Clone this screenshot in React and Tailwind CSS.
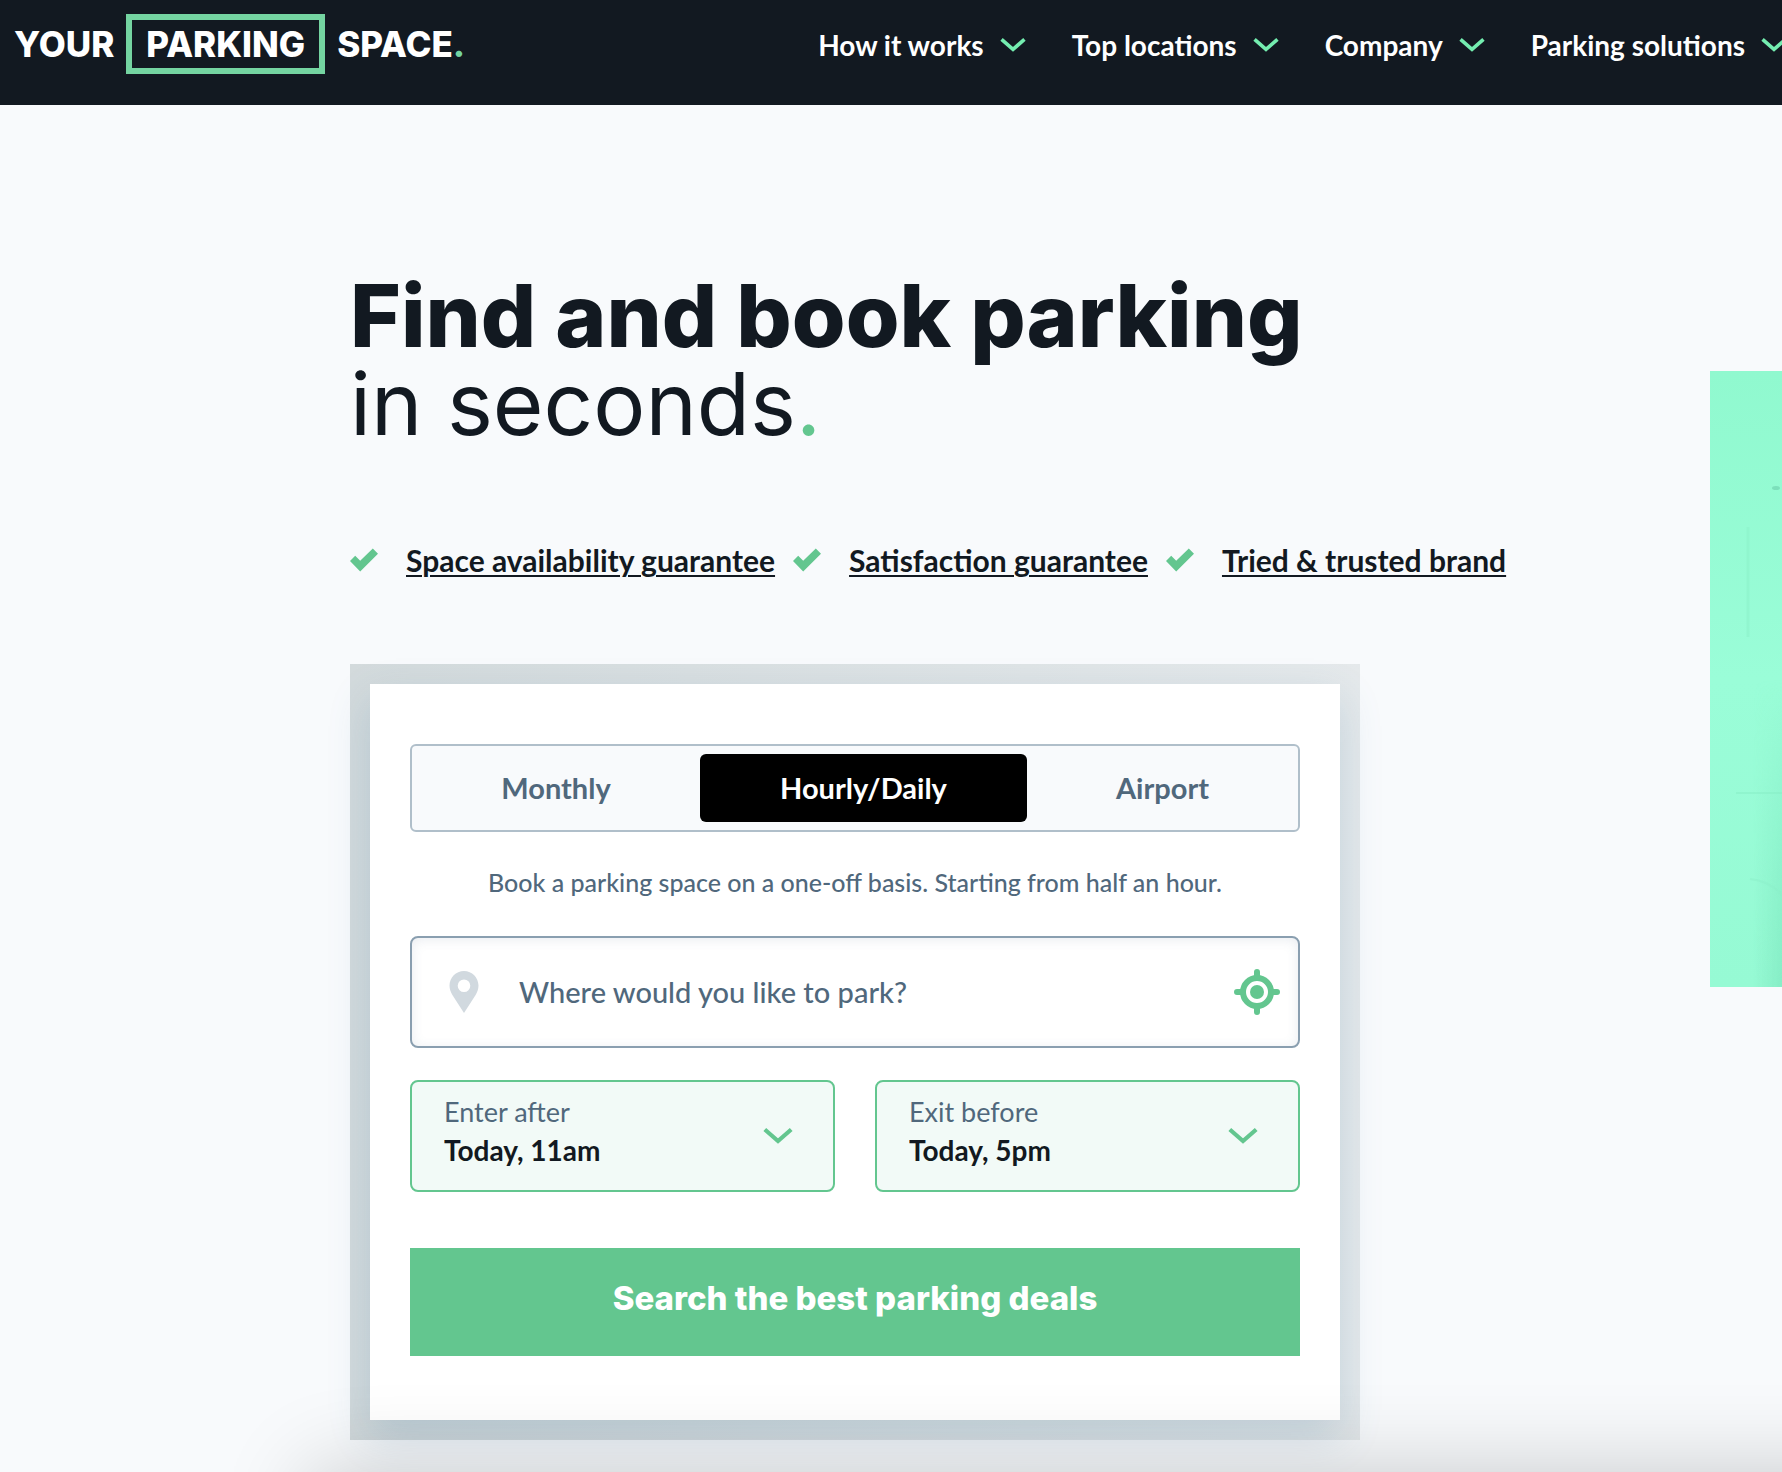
import React, { useState } from "react";

const navItems = ["How it works", "Top locations", "Company", "Parking solutions"];

const guarantees = [
  "Space availability guarantee",
  "Satisfaction guarantee",
  "Tried & trusted brand",
];

const tabs = ["Monthly", "Hourly/Daily", "Airport"];

function Chevron({ className }) {
  return (
    <svg className={className} width="30" height="18" viewBox="0 0 30 18" fill="none" aria-hidden="true">
      <path d="M1.800 2.500 15 14 28.200 2.500" stroke="currentColor" strokeWidth="4.200" />
    </svg>
  );
}

function CheckIcon() {
  return (
    <svg className="shrink-0 text-[#63c68f]" width="28" height="24" viewBox="0 0 28 24" fill="currentColor" aria-hidden="true">
      <path d="M0 13 5.200 7.800 10.200 12.800 22.800 0.600 28 5.800 10.200 23.400Z" />
    </svg>
  );
}

function PinIcon() {
  return (
    <svg className="shrink-0 text-[#d1d9df]" width="30" height="42" viewBox="0 0 30 42" fill="currentColor" aria-hidden="true">
      <path
        fillRule="evenodd"
        d="M15 0C6.9 0 .5 6.5.5 14.6c0 3.6 1.2 6.500 2.900 9.400L15 42l11.600-18c1.700-2.900 2.900-5.800 2.900-9.400C29.500 6.500 23.100 0 15 0Zm0 8.500a6.300 6.300 0 1 1 0 12.600 6.300 6.300 0 0 1 0-12.600Z"
      />
    </svg>
  );
}

function TargetIcon() {
  return (
    <svg width="46" height="46" viewBox="0 0 46 46" fill="none" aria-hidden="true">
      <circle cx="23" cy="23" r="14" stroke="currentColor" strokeWidth="6" />
      <circle cx="23" cy="23" r="7" fill="currentColor" />
      <path d="M23 3v6M23 37v6M3 23h6M37 23h6" stroke="currentColor" strokeWidth="6" strokeLinecap="round" />
    </svg>
  );
}

function Header() {
  return (
    <header className="flex h-[105px] items-start overflow-hidden bg-[#121921] pt-[14px] pl-[14px] whitespace-nowrap text-white">
      <a href="#" className="flex h-[60px] shrink-0 items-center gap-3 font-[Inter,sans-serif] text-[35px] font-extrabold">
        <span>YOUR</span>
        <span className="flex h-[60px] items-center border-[6px] border-[#74d4a1] px-[14px]">PARKING</span>
        <span>
          SPACE<span className="text-[#74d4a1]">.</span>
        </span>
      </a>
      <nav className="ml-[353px] flex h-[62px] shrink-0 items-center gap-[46px]">
        {navItems.map((item) => (
          <button key={item} type="button" className="flex shrink-0 items-center gap-4 text-[28px] font-bold">
            {item}
            <Chevron className="w-[26px] text-[#74edb0]" />
          </button>
        ))}
      </nav>
    </header>
  );
}

function TimeSelect({ id, label, value }) {
  return (
    <div className="flex h-28 flex-1 items-center justify-between rounded-lg border-2 border-[#63c68f] bg-[#f2faf7] pr-10 pl-8">
      <div className="flex flex-1 flex-col pb-[10px]">
        <label htmlFor={id} className="text-[27px] leading-[38px] text-[#50687c]">
          {label}
        </label>
        <select id={id} className="w-full appearance-none bg-transparent text-[28px] leading-[38px] font-bold text-[#121921] outline-none">
          <option>{value}</option>
        </select>
      </div>
      <Chevron className="text-[#63c68f]" />
    </div>
  );
}

function SearchCard() {
  const [active, setActive] = useState("Hourly/Daily");
  const [place, setPlace] = useState("");

  return (
    <div className="max-w-[1010px] bg-linear-to-r from-[#d3dadc] to-[#e5e9eb] p-5">
      <form
        className="bg-white px-10 pt-[60px] pb-16 shadow-[0_16px_40px_rgba(60,120,160,0.2)]"
        onSubmit={(e) => e.preventDefault()}
      >
        <div className="grid h-[88px] grid-cols-[288fr_327fr_271fr] rounded-md border-2 border-[#b0bfca] bg-[#f8fafc] py-2">
          {tabs.map((tab) => (
            <button
              key={tab}
              type="button"
              onClick={() => setActive(tab)}
              className={
                tab === active
                  ? "rounded-md bg-black text-[29px] font-bold text-white"
                  : "text-[29px] font-bold text-[#50687c]"
              }
            >
              {tab}
            </button>
          ))}
        </div>

        <p className="mt-[30px] text-center text-[25px] leading-10 font-medium text-[#50687c]">
          Book a parking space on a one-off basis. Starting from half an hour.
        </p>

        <div className="mt-[34px] flex h-28 items-center rounded-lg border-2 border-[#8a9fb0] pr-[18px] pl-[37px] shadow-[inset_0_2px_12px_rgba(80,110,140,0.12)]">
          <PinIcon />
          <input
            type="text"
            aria-label="Where would you like to park?"
            placeholder="Where would you like to park?"
            value={place}
            onChange={(e) => setPlace(e.target.value)}
            className="ml-10 min-w-0 flex-1 bg-transparent text-[29px] font-medium text-[#121921] outline-none placeholder:text-[#50687c] placeholder:opacity-100"
          />
          <button type="button" aria-label="Use my location" className="text-[#63c68f]">
            <TargetIcon />
          </button>
        </div>

        <div className="mt-8 flex gap-10">
          <TimeSelect id="enter" label="Enter after" value="Today, 11am" />
          <TimeSelect id="exit" label="Exit before" value="Today, 5pm" />
        </div>

        <button type="submit" className="mt-14 h-[108px] w-full bg-[#63c68f] pb-[6px] font-[Inter,sans-serif] text-[33px] font-extrabold text-white">
          Search the best parking deals
        </button>
      </form>
    </div>
  );
}

function App() {
  return (
    <div className="relative min-h-screen overflow-hidden bg-[#f8fafc] font-[Lato,sans-serif] text-[#121921]">
      <Header />
      <main className="flex pl-[350px]">
        <section className="min-w-0 flex-1 pt-[167px] pb-[31px]">
          <h1 className="font-[Inter,sans-serif] text-[87px] leading-[88px] whitespace-nowrap">
            <span className="block font-extrabold">Find and book parking</span>
            <span className="block">
              in seconds<span className="text-[#63c68f]">.</span>
            </span>
          </h1>

          <ul className="mt-[92px] mb-[84px] flex gap-[18px]">
            {guarantees.map((text) => (
              <li key={text} className="flex items-center gap-7 whitespace-nowrap">
                <CheckIcon />
                <a href="#" className="text-[30px] leading-10 font-bold underline decoration-2 underline-offset-3">
                  {text}
                </a>
              </li>
            ))}
          </ul>

          <SearchCard />
        </section>

        {/* Edge of the hero photo */}
        <div className="mt-[266px] h-[616px] w-[72px] shrink-0 bg-linear-to-b from-[#90f9cf] via-[#9afdd8] to-[#96fad4]">
          <svg className="h-full w-full" viewBox="0 0 72 616" preserveAspectRatio="none" aria-hidden="true">
            <defs>
              <linearGradient id="edge">
                <stop offset="0.6" stopColor="#7fe8c0" stopOpacity="0" />
                <stop offset="1" stopColor="#7fe8c0" stopOpacity="0.7" />
              </linearGradient>
              <linearGradient id="fade" x1="0" y1="0" x2="0" y2="1">
                <stop offset="0.5" stopColor="#fff" stopOpacity="0" />
                <stop offset="1" stopColor="#fff" />
              </linearGradient>
              <mask id="lower">
                <rect width="72" height="616" fill="url(#fade)" />
              </mask>
            </defs>
            <rect width="72" height="616" fill="url(#edge)" mask="url(#lower)" />
            <ellipse cx="66" cy="117" rx="4" ry="2" fill="#7ce0bb" />
            <path d="M38 156v110" stroke="#8df3cb" strokeWidth="3" opacity="0.6" />
            <path d="M26 422h46" stroke="#86ecc5" strokeWidth="1.500" opacity="0.6" />
            <path d="M40 508q20 2 32 16" stroke="#8bf0ca" strokeWidth="2" fill="none" opacity="0.5" />
          </svg>
        </div>
      </main>

      {/* Soft shadow cast by the bar below the fold */}
      <div className="pointer-events-none fixed top-full -right-40 left-[310px] h-40 shadow-[0_0_90px_rgba(0,0,0,0.2)]" />
    </div>
  );
}

export default App;
